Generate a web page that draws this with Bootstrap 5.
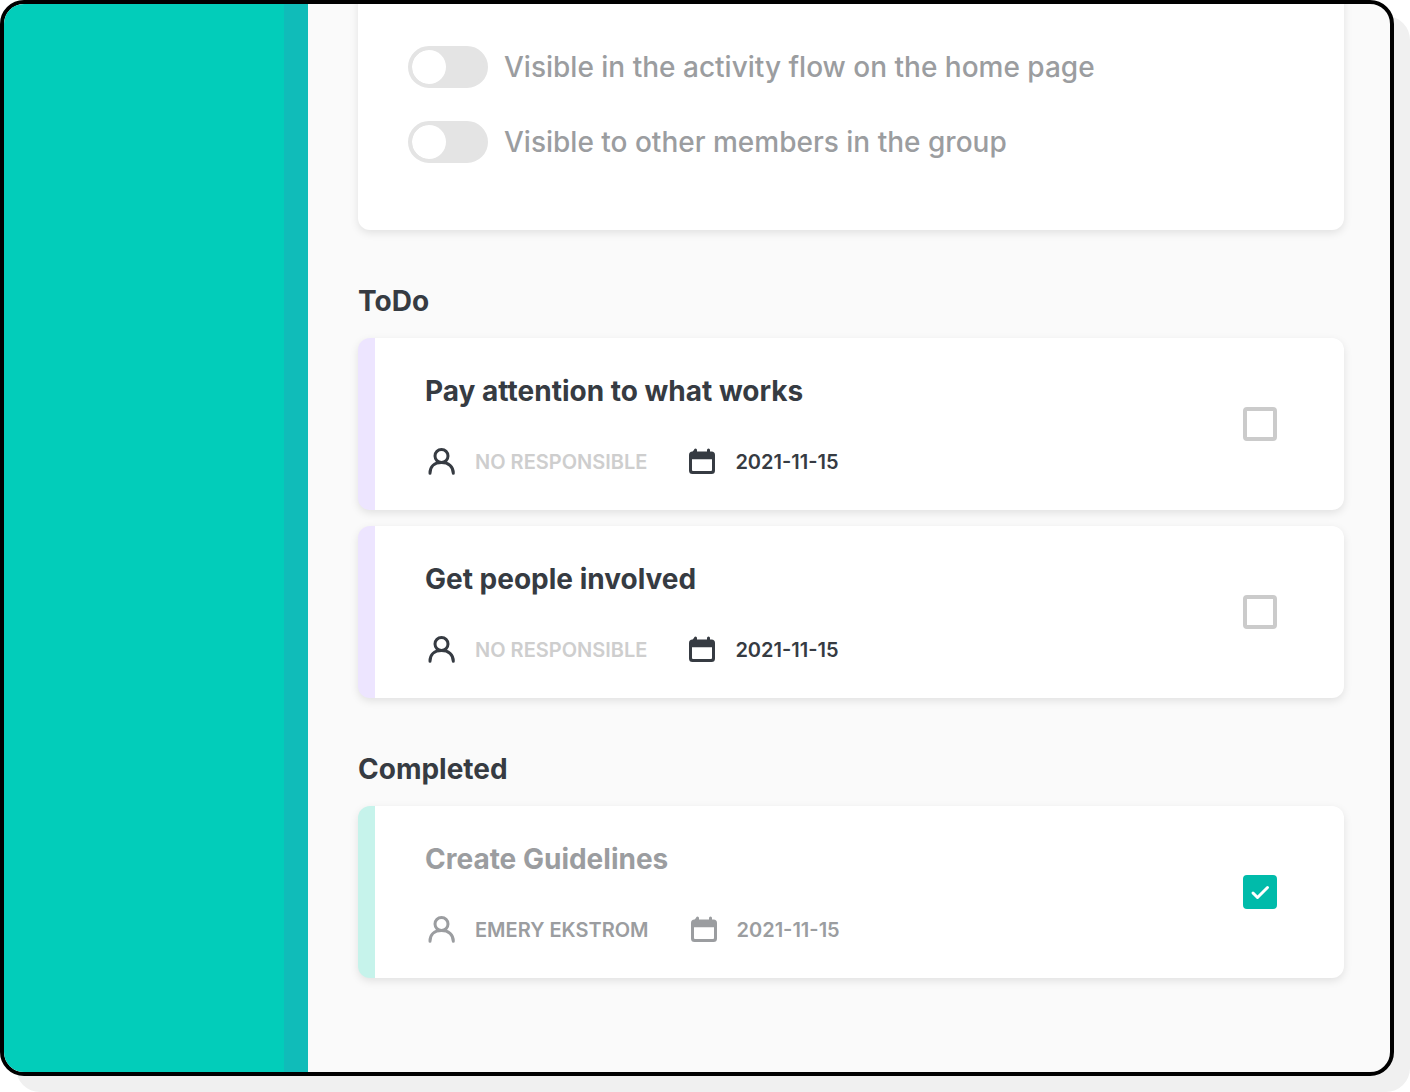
<!DOCTYPE html>
<html lang="en">
<head>
<meta charset="utf-8">
<meta name="viewport" content="width=device-width, initial-scale=1">
<title>Tasks</title>
<link href="https://cdn.jsdelivr.net/npm/bootstrap@5.3.0/dist/css/bootstrap.min.css" rel="stylesheet">
<style>
:root { --ink: #363b42; --muted: #9b9da0; --faint: #cecece; }
body { background: #fff; color: var(--ink); font-family: Inter, "Liberation Sans", sans-serif; }
.app-frame { min-height: calc(100vh - 16px); margin: 0 16px 16px 0; border: 4px solid #000; border-radius: 24px; background: #fafafa; box-shadow: 16px 16px 0 #f0f0f0; }
.side-panel { width: 304px; background: #02cdba; border-right: 24px solid #10bcb9; }
.content-area { padding: 0 46px 50px 50px; }
.panel { background: #fff; border-radius: 12px; box-shadow: 0 3px 8px rgba(0,0,0,.1); }
.settings-panel { margin-top: -20px; padding: 62px 50px 67px; gap: 33px; }
.switch-row { min-height: 42px; gap: 16px; }
.switch-row label { font-size: 28px; line-height: 40px; font-weight: 500; color: var(--muted); }
.form-switch .form-check-input.toggle { width: 80px; height: 42px; margin: 0; border: 4px solid #e4e4e4; background-color: #e4e4e4; border-radius: 21px; background-size: 34px 34px; background-origin: padding-box; background-image: url("data:image/svg+xml,%3Csvg xmlns='http://www.w3.org/2000/svg' viewBox='0 0 34 34'%3E%3Ccircle cx='17' cy='17' r='17' fill='%23fff'/%3E%3C/svg%3E"); }
.form-switch .form-check-input.toggle:checked { background-color: #00bbaa; border-color: #00bbaa; }
.section-title { font-size: 28px; line-height: 40px; font-weight: 700; margin: 51px 0 17px; }
.task-list { gap: 16px; }
.task { border-left: 17px solid #ede5ff; padding: 33px 67px 34px 50px; }
.task.done { border-left-color: #c6f3eb; color: var(--muted); }
.task-title { font-size: 28px; line-height: 40px; font-weight: 700; margin: 0 0 37px; }
.task-meta { font-size: 20px; line-height: 28px; font-weight: 600; column-gap: 38px; }
.meta-item { gap: 20px; }
.meta-item svg { width: 30px; height: 28px; flex: none; }
.unassigned { color: var(--faint); }
.form-check-input.tick { width: 34px; height: 34px; margin: 0; border: 4px solid #cbcbcb; border-radius: 4px; background-color: #fff; flex: none; }
.form-check-input.tick:checked { background-color: #00bbaa; border-color: #00bbaa; background-size: 34px 34px; background-image: url("data:image/svg+xml,%3Csvg xmlns='http://www.w3.org/2000/svg' viewBox='0 0 34 34'%3E%3Cpath d='M10 18l4.500 4.500L24.500 12.500' fill='none' stroke='%23fff' stroke-width='3' stroke-linecap='round' stroke-linejoin='round'/%3E%3C/svg%3E"); }
</style>
</head>
<body>
<svg class="d-none" aria-hidden="true">
  <symbol id="person" viewBox="0 0 30 28">
    <g fill="none" stroke="currentColor" stroke-width="3" stroke-linecap="round"><circle cx="16.500" cy="8" r="6.500"/><path d="M5 25.200C5 18.500 9.500 14.500 16.500 14.500S28.300 18.500 28.300 25.200"/></g>
  </symbol>
  <symbol id="calendar" viewBox="0 0 30 28">
    <path fill="currentColor" fill-rule="evenodd" d="M9 2a1.500 1.500 0 0 1 3 0v1.500h10V2a1.500 1.500 0 0 1 3 0v1.500h1.500a3.500 3.500 0 0 1 3.500 3.500v15.500a3.500 3.500 0 0 1-3.500 3.500h-19A3.500 3.500 0 0 1 4 22.500V7a3.500 3.500 0 0 1 3.500-3.500zM7 11.300v10.700a1 1 0 0 0 1 1h18a1 1 0 0 0 1-1v-10.700z"/>
  </symbol>
</svg>
<div class="app-frame d-flex overflow-hidden">
  <aside class="side-panel flex-shrink-0"></aside>
  <main class="content-area flex-grow-1">
    <section class="panel settings-panel d-flex flex-column">
      <div class="form-switch switch-row d-flex align-items-center p-0">
        <input class="form-check-input toggle flex-shrink-0" type="checkbox" role="switch" id="flow">
        <label for="flow">Visible in the activity flow on the home page</label>
      </div>
      <div class="form-switch switch-row d-flex align-items-center p-0">
        <input class="form-check-input toggle flex-shrink-0" type="checkbox" role="switch" id="members">
        <label for="members">Visible to other members in the group</label>
      </div>
    </section>

    <h2 class="section-title">ToDo</h2>
    <div class="task-list d-flex flex-column">
      <article class="panel task d-flex align-items-center justify-content-between">
        <div>
          <h3 class="task-title"><label for="task1">Pay attention to what works</label></h3>
          <div class="task-meta d-flex flex-wrap">
            <span class="meta-item d-flex"><svg><use href="#person"/></svg><span class="unassigned">NO RESPONSIBLE</span></span>
            <span class="meta-item d-flex"><svg><use href="#calendar"/></svg><time datetime="2021-11-15">2021-11-15</time></span>
          </div>
        </div>
        <input class="form-check-input tick" type="checkbox" id="task1">
      </article>
      <article class="panel task d-flex align-items-center justify-content-between">
        <div>
          <h3 class="task-title"><label for="task2">Get people involved</label></h3>
          <div class="task-meta d-flex flex-wrap">
            <span class="meta-item d-flex"><svg><use href="#person"/></svg><span class="unassigned">NO RESPONSIBLE</span></span>
            <span class="meta-item d-flex"><svg><use href="#calendar"/></svg><time datetime="2021-11-15">2021-11-15</time></span>
          </div>
        </div>
        <input class="form-check-input tick" type="checkbox" id="task2">
      </article>
    </div>

    <h2 class="section-title">Completed</h2>
    <div class="task-list d-flex flex-column">
      <article class="panel task done d-flex align-items-center justify-content-between">
        <div>
          <h3 class="task-title"><label for="task3">Create Guidelines</label></h3>
          <div class="task-meta d-flex flex-wrap">
            <span class="meta-item d-flex"><svg><use href="#person"/></svg><span>EMERY EKSTROM</span></span>
            <span class="meta-item d-flex"><svg><use href="#calendar"/></svg><time datetime="2021-11-15">2021-11-15</time></span>
          </div>
        </div>
        <input class="form-check-input tick" type="checkbox" id="task3" checked>
      </article>
    </div>
  </main>
</div>
<script src="https://cdn.jsdelivr.net/npm/bootstrap@5.3.0/dist/js/bootstrap.bundle.min.js"></script>
</body>
</html>
